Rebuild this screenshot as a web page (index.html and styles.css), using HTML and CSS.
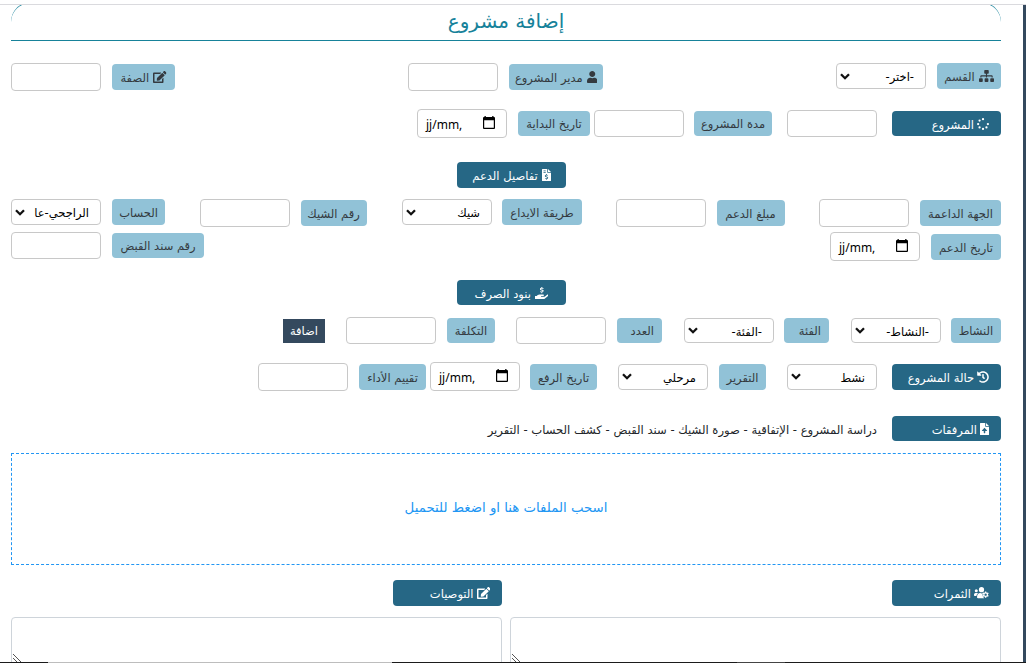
FILE: index.html
```
<!DOCTYPE html>
<html lang="ar" dir="rtl">
<head>
<meta charset="utf-8">
<title>إضافة مشروع</title>
<link rel="stylesheet" href="styles.css">
</head>
<body>
<svg class="sprite" aria-hidden="true">
<symbol id="sitemap" viewBox="0 0 640 512"><path d="M128 352H32c-17.67 0-32 14.33-32 32v96c0 17.67 14.33 32 32 32h96c17.67 0 32-14.33 32-32v-96c0-17.67-14.33-32-32-32zm-24-80h192v48h48v-48h192v48h48v-57.59c0-21.17-17.23-38.41-38.41-38.41H344v-64h40c17.67 0 32-14.33 32-32V32c0-17.67-14.33-32-32-32H256c-17.67 0-32 14.33-32 32v96c0 17.67 14.33 32 32 32h40v64H94.41C73.23 224 56 241.23 56 262.41V320h48v-48zm264 80h-96c-17.67 0-32 14.33-32 32v96c0 17.67 14.33 32 32 32h96c17.67 0 32-14.33 32-32v-96c0-17.67-14.33-32-32-32zm240 0h-96c-17.67 0-32 14.33-32 32v96c0 17.67 14.33 32 32 32h96c17.67 0 32-14.33 32-32v-96c0-17.67-14.33-32-32-32z"/></symbol>
<symbol id="user" viewBox="0 0 448 512"><path d="M224 256c70.7 0 128-57.3 128-128S294.7 0 224 0 96 57.3 96 128s57.3 128 128 128zm89.6 32h-16.7c-22.2 10.2-46.9 16-72.9 16s-50.6-5.8-72.9-16h-16.7C60.2 288 0 348.2 0 422.4V464c0 26.5 21.5 48 48 48h352c26.5 0 48-21.5 48-48v-41.6c0-74.2-60.2-134.4-134.4-134.4z"/></symbol>
<symbol id="edit" viewBox="0 0 576 512"><path d="M402.6 83.2l90.2 90.2c3.8 3.8 3.8 10 0 13.8L274.4 405.6l-92.8 10.3c-12.4 1.4-22.9-9.1-21.5-21.5l10.3-92.8L388.8 83.2c3.8-3.8 10-3.8 13.8 0zm162-22.9l-48.8-48.8c-15.2-15.2-39.9-15.2-55.2 0l-35.4 35.4c-3.8 3.8-3.8 10 0 13.8l90.2 90.2c3.8 3.8 10 3.8 13.8 0l35.4-35.4c15.2-15.3 15.2-40 0-55.2zM384 346.2V448H64V128h229.8c3.2 0 6.2-1.3 8.5-3.5l40-40c7.6-7.6 2.2-20.5-8.5-20.5H48C21.5 64 0 85.5 0 112v352c0 26.5 21.5 48 48 48h352c26.5 0 48-21.5 48-48V306.2c0-10.7-12.9-16-20.5-8.5l-40 40c-2.2 2.3-3.5 5.3-3.5 8.5z"/></symbol>
<symbol id="spinner" viewBox="0 0 512 512"><circle cx="256" cy="48" r="48"/><circle cx="256" cy="464" r="48"/><circle cx="48" cy="256" r="48"/><circle cx="464" cy="256" r="48"/><circle cx="109" cy="109" r="48"/><circle cx="109" cy="403" r="48"/><circle cx="403" cy="403" r="48"/></symbol>
<symbol id="invoice" viewBox="0 0 384 512"><path fill-rule="evenodd" d="M24 0H224V136q0 24 24 24H384V488q0 24-24 24H24q-24 0-24-24V24Q0 0 24 0zM64 64v32h96V64zM64 128v32h96v-32zM176 216v30c-62 5-75 80-20 98l58 18c18 6 14 28-4 28h-36c-9 0-17-3-24-8l-24 23c14 12 31 18 50 19v32h32v-32c62-5 75-80 20-98l-58-18c-18-6-14-28 4-28h36c9 0 17 3 24 8l24-23c-14-12-31-18-50-19v-30zM256 0l128 128H256z"/></symbol>
<symbol id="fileup" viewBox="0 0 384 512"><path fill-rule="evenodd" d="M24 0H224V136q0 24 24 24H384V488q0 24-24 24H24q-24 0-24-24V24Q0 0 24 0zM256 0l128 128H256zM192 205L82 315q-10 21 14 21h64v80q0 16 16 16h32q16 0 16-16v-80h64q24 0 14-21z"/></symbol>
<symbol id="hand" viewBox="0 0 576 512"><path d="M565 328c-13-12-34-11-47 0l-92 74c-11 9-25 14-40 14H272c-9 0-16-7-16-16s7-16 16-16h78c16 0 31-11 33-27 3-20-12-37-31-37H192c-27 0-53 9-74 26l-46 38H16c-9 0-16 7-16 16v96c0 9 7 16 16 16h357c14 0 28-5 40-14l151-121c15-12 16-36 1-49z"/><path d="M272 0v34c-69 4-84 87-24 106l62 18c18 6 15 30-4 30h-40c-10 0-20-4-28-10l-30 28c18 15 39 22 64 22v36h38v-36c69-4 84-87 24-106l-62-18c-18-6-15-30 4-30h40c10 0 20 4 28 10l30-28c-18-15-39-22-64-22V0z"/></symbol>
<symbol id="history" viewBox="0 0 512 512"><path d="M504 255.531c.253 136.64-111.18 248.372-247.82 248.468-59.015.042-113.223-20.53-155.822-54.911-11.077-8.94-11.905-25.541-1.839-35.607l11.267-11.267c8.609-8.609 22.353-9.551 31.891-1.984C173.062 425.135 212.781 440 256 440c101.705 0 184-82.311 184-184 0-101.705-82.311-184-184-184-48.814 0-93.149 18.969-126.068 49.932l50.754 50.754c10.08 10.08 2.941 27.314-11.313 27.314H24c-8.837 0-16-7.163-16-16V38.627c0-14.254 17.234-21.393 27.314-11.314l49.372 49.372C129.209 34.136 189.552 8 256 8c136.81 0 247.747 110.781 248 247.531zm-180.912 78.784l9.823-12.63c8.138-10.463 6.253-25.542-4.21-33.679L288 256.349V152c0-13.255-10.745-24-24-24h-16c-13.255 0-24 10.745-24 24v135.651l65.409 50.874c10.463 8.137 25.541 6.253 33.679-4.21z"/></symbol>
<symbol id="team" viewBox="0 0 640 512"><circle cx="96" cy="160" r="64"/><circle cx="320" cy="112" r="112"/><path d="M0 320q0-64 64-64h64q30 0 46 20-64 36-74 108H32q-32 0-32-32zM128 432c0-98 50-176 140-176 45 24 75 18 110 4-22 60-10 130 8 160 10 25 35 50 50 60H176q-48 0-48-48z"/><path fill-rule="evenodd" d="M470 190h52l9 43 27 15 41-14 27 46-32 29v34l32 29-27 46-41-14-27 15-9 43h-52l-9-43-27-15-41 14-27-46 32-29v-34l-32-29 27-46 41 14 27-15zM496 276a50 50 0 1 0 0 100a50 50 0 1 0 0-100z"/></symbol>
<symbol id="chev" viewBox="0 0 10 7"><path d="M1 1.200L5 5.200L9 1.200" fill="none" stroke="#111" stroke-width="2.300"/></symbol>
<symbol id="cal" viewBox="0 0 12 13"><path fill-rule="evenodd" d="M1.500 0h1.300v1h6.400V0h1.300v1h.5q1 0 1 1V12q0 1-1 1H1q-1 0-1-1V2q0-1 1-1h.5zM1.200 4.200v7.600h9.600V4.200z"/></symbol>
</svg>
<div class="topbar"></div>
<main class="page">
<header class="heading"><h1>إضافة مشروع</h1></header>

<div class="row spread row-dept">
  <div class="field up"><label class="tag w64"><svg class="i wide"><use href="#sitemap"/></svg><span>القسم</span></label><div class="sel"><span>-اختر-</span><svg><use href="#chev"/></svg></div></div>
  <div class="field"><label class="tag w94"><svg class="i slim"><use href="#user"/></svg><span>مدير المشروع</span></label><input class="box"></div>
  <div class="field"><label class="tag w63"><svg class="i mid"><use href="#edit"/></svg><span>الصفة</span></label><input class="box"></div>
</div>

<div class="row row-project">
  <div class="head short"><svg class="i"><use href="#spinner"/></svg><span>المشروع</span></div>
  <input class="box short g15">
  <label class="tag short w78 g15"><span>مدة المشروع</span></label><input class="box short g10">
  <label class="tag short w72 g4"><span>تاريخ البداية</span></label><div class="date g11"><svg><use href="#cal"/></svg><span>jj/mm,</span></div>
</div>

<div class="row center row-support"><div class="head mid-head"><svg class="i file"><use href="#invoice"/></svg><span>تفاصيل الدعم</span></div></div>

<div class="row spread row-donor">
  <div class="field"><label class="tag w81"><span>الجهة الداعمة</span></label><input class="box"></div>
  <div class="field"><label class="tag w68"><span>مبلغ الدعم</span></label><input class="box"></div>
  <div class="field up tight"><label class="tag w80"><span>طريقة الايداع</span></label><div class="sel"><span>شيك</span><svg><use href="#chev"/></svg></div></div>
  <div class="field"><label class="tag w66"><span>رقم الشيك</span></label><input class="box"></div>
  <div class="field up"><label class="tag w53"><span>الحساب</span></label><div class="sel"><span>الراجحي-عا</span><svg><use href="#chev"/></svg></div></div>
</div>
<div class="row spread row-receipt">
  <div class="field"><label class="tag w70"><span>تاريخ الدعم</span></label><div class="date"><svg><use href="#cal"/></svg><span>jj/mm,</span></div></div>
  <div class="field receipt"><label class="tag short w92"><span>رقم سند القبض</span></label><input class="box short"></div>
</div>

<div class="row center row-spend"><div class="head short mid-head"><svg class="i mid"><use href="#hand"/></svg><span>بنود الصرف</span></div></div>

<div class="row row-activity">
  <label class="tag short w50"><span>النشاط</span></label><div class="sel short g10"><span>-النشاط-</span><svg><use href="#chev"/></svg></div>
  <label class="tag short w45 start g22"><span>الفئة</span></label><div class="sel short g10"><span>-الفئة-</span><svg><use href="#chev"/></svg></div>
  <label class="tag short w45 start g22"><span>العدد</span></label><input class="box short g11">
  <label class="tag short w48 g21"><span>التكلفة</span></label><input class="box short g11">
  <button class="add g21">اضافة</button>
</div>

<div class="row row-state">
  <div class="head"><svg class="i"><use href="#history"/></svg><span>حالة المشروع</span></div><div class="sel g15"><span>نشط</span><svg><use href="#chev"/></svg></div>
  <label class="tag w47 g21"><span>التقرير</span></label><div class="sel g11"><span>مرحلي</span><svg><use href="#chev"/></svg></div>
  <label class="tag w67 g21"><span>تاريخ الرفع</span></label><div class="date g10"><svg><use href="#cal"/></svg><span>jj/mm,</span></div>
  <label class="tag w67 g4"><span>تقييم الأداء</span></label><input class="box g11">
</div>

<div class="row row-files">
  <div class="head short"><svg class="i file"><use href="#fileup"/></svg><span>المرفقات</span></div>
  <p class="note g15">دراسة المشروع - الإتفاقية - صورة الشيك - سند القبض - كشف الحساب - التقرير</p>
</div>
<div class="drop"><span>اسحب الملفات هنا او اضغط للتحميل</span></div>
<section class="notes">
  <div><div class="head"><svg class="i wide"><use href="#team"/></svg><span>الثمرات</span></div><div class="area"><svg class="grip"><path d="M0 0L8 8M0 4L4 8"/></svg></div></div>
  <div><div class="head"><svg class="i mid"><use href="#edit"/></svg><span>التوصيات</span></div><div class="area"><svg class="grip"><path d="M0 0L8 8M0 4L4 8"/></svg></div></div>
</section>
</main>
<div class="edge"></div>
</body>
</html>
```
FILE: styles.css
```
* { box-sizing: border-box; }
body { margin: 0; width: 1026px; height: 663px; overflow: hidden; position: relative; background: #fff; font: 11.5px "DejaVu Sans", sans-serif; color: #212529; }
.sprite { position: absolute; width: 0; height: 0; }
.topbar { height: 5px; border-bottom: 1px solid #dadade; }
.page { height: 657px; overflow: hidden; padding: 0 22px 0 11px; border-right: 3px solid #34495e; }
.heading { margin-top: -3px; height: 39px; border: solid #17829a; border-width: 1px 0; border-radius: 20px 20px 0 0; display: flex; justify-content: center; align-items: center; }
h1 { margin: 0 0 1px; font-size: 20px; font-weight: 400; color: #17829a; line-height: 34px; white-space: nowrap; }
.row { display: flex; align-items: center; white-space: nowrap; }
.spread { justify-content: space-between; }
.center { justify-content: center; padding-left: 11px; }
.row-dept { height: 28px; margin-top: 22px; }
.row-project { height: 29px; margin-top: 18px; }
.row-support { height: 26px; margin-top: 24px; }
.row-donor { height: 28px; margin-top: 11px; }
.row-receipt { height: 29px; margin-top: 5px; }
.row-spend { height: 25px; margin-top: 19px; }
.row-activity { height: 27px; margin-top: 12px; }
.row-state { height: 29px; margin-top: 18px; }
.row-files { height: 25px; margin-top: 25px; }
.field { display: flex; align-items: center; gap: 11px; }
.field.tight { gap: 10px; margin: 0 -1px 0 1px; }
.up, .receipt { align-self: flex-start; }
.tag { flex: none; height: 26px; border-radius: 4px; background: #91c2d7; color: #343a40; display: flex; justify-content: center; align-items: center; gap: 4px; }
.tag.start { justify-content: flex-start; padding-right: 8px; }
.tag span, .sel span, .head span { padding-top: 2px; }
.tag.short span { padding-top: 1px; }
.box, .sel, .date { flex: none; width: 90px; border: 1px solid #c8c8c8; border-radius: 4px; background: #fff; color: #000; }
.box { height: 28px; padding: 0; margin: 0; }
.sel { height: 26px; padding: 0 11px 0 3px; display: flex; align-items: center; justify-content: space-between; }
.sel svg { width: 10px; height: 7px; }
.date { height: 29px; padding: 2px 11px 0 8px; display: flex; align-items: center; justify-content: space-between; font: 12px "Noto Sans", sans-serif; }
.date svg { width: 12px; height: 13px; margin-top: -4px; }
.date span { direction: ltr; unicode-bidi: isolate; }
.head { flex: none; width: 109px; height: 26px; padding-right: 12px; border-radius: 4px; background: #266785; color: #fff; display: flex; align-items: center; gap: 3px; }
.mid-head { padding: 0; justify-content: center; gap: 4px; }
.box.short { height: 27px; }
.tag.short, .sel.short, .head.short { height: 25px; }
.i { flex: none; width: 12px; height: 12px; fill: currentColor; }
.i.wide { width: 15px; }
.i.mid { width: 13.5px; }
.i.slim { width: 10.5px; }
.i.file { width: 9px; }
.add { width: 42px; height: 24px; padding: 0; border: 0; background: #34495e; color: #fff; font: inherit; }
.note { margin-top: 2px; margin-bottom: 0; color: #212529; font-size: 11.6px; }
.drop { height: 112px; margin-top: 12px; padding-bottom: 4px; border: 1px dashed #2196f3; display: flex; align-items: center; justify-content: center; color: #2196f3; font-size: 13.3px; white-space: nowrap; }
.notes { display: flex; gap: 8px; margin-top: 15px; }
.notes > div { flex: 1; }
.area { position: relative; height: 60px; margin-top: 11px; border: 1px solid #ced4da; border-radius: 4px; }
.grip { position: absolute; left: 1px; top: 36px; width: 9px; height: 9px; fill: none; stroke: #555; }
.edge { height: 1px; background: linear-gradient(90deg, #1b1b1b 48px, #bdbdbd 48px 392px, #1b1b1b 392px 737px, #444 737px 785px, #1b1b1b 785px); }
.g4 { margin-right: 4px; }
.g10 { margin-right: 10px; }
.g11 { margin-right: 11px; }
.g15 { margin-right: 15px; }
.g21 { margin-right: 21px; }
.g22 { margin-right: 22px; }
.w45 { width: 45px; }
.w47 { width: 47px; }
.w48 { width: 48px; }
.w50 { width: 50px; }
.w53 { width: 53px; }
.w63 { width: 63px; }
.w64 { width: 64px; }
.w66 { width: 66px; }
.w67 { width: 67px; }
.w68 { width: 68px; }
.w70 { width: 70px; }
.w72 { width: 72px; }
.w78 { width: 78px; }
.w80 { width: 80px; }
.w81 { width: 81px; }
.w92 { width: 92px; }
.w94 { width: 94px; }
```
